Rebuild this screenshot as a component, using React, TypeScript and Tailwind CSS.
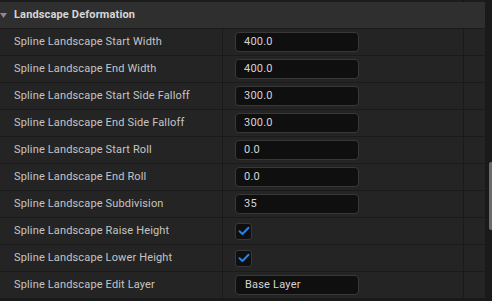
import { Fragment } from 'react';

type Row = { label: string; kind: 'num' | 'check' | 'text'; value?: string };

const rows: Row[] = [
  { label: 'Spline Landscape Start Width', kind: 'num', value: '400.0' },
  { label: 'Spline Landscape End Width', kind: 'num', value: '400.0' },
  { label: 'Spline Landscape Start Side Falloff', kind: 'num', value: '300.0' },
  { label: 'Spline Landscape End Side Falloff', kind: 'num', value: '300.0' },
  { label: 'Spline Landscape Start Roll', kind: 'num', value: '0.0' },
  { label: 'Spline Landscape End Roll', kind: 'num', value: '0.0' },
  { label: 'Spline Landscape Subdivision', kind: 'num', value: '35' },
  { label: 'Spline Landscape Raise Height', kind: 'check' },
  { label: 'Spline Landscape Lower Height', kind: 'check' },
  { label: 'Spline Landscape Edit Layer', kind: 'text', value: 'Base Layer' },
];

const CheckBox = () => (
  <div className="w-[17px] h-[17px] rounded-[3px] bg-[#0f0f0f] border border-[#383838] flex items-center justify-center">
    <svg width="12" height="10" viewBox="0 0 12 10" fill="none">
      <path d="M1.5 5.2 L4.5 8 L10.5 1.8" stroke="#2383e8" strokeWidth="2" strokeLinecap="round" strokeLinejoin="round" />
    </svg>
  </div>
);

const ValueCell = ({ row }: { row: Row }) => {
  if (row.kind === 'check') return <CheckBox />;
  return (
    <div
      className={`w-[124px] h-[20px] rounded-[4px] bg-[#0f0f0f] border border-[#383838] flex items-center text-[11px] tracking-[0.2px] text-[#d4d4d4] ${
        row.kind === 'text' ? 'pl-[9px]' : 'pl-[8px]'
      }`}
    >
      {row.value}
    </div>
  );
};

export default function App() {
  return (
    <div
      className="w-[492px] h-[301px] bg-[#1a1a1a] flex overflow-hidden"
      style={{ fontFamily: 'Roboto, "Liberation Sans", sans-serif' }}
    >
      <div className="w-[485px] flex flex-col">
        <div className="h-[2px] flex shrink-0">
          <div className="w-[463px] bg-[#1c1c1c]" />
          <div className="w-[1px] bg-[#121212]" />
          <div className="flex-1 bg-[#1c1c1c]" />
        </div>
        <div className="h-[26px] shrink-0 bg-[#2f2f2f] flex items-center relative">
          <svg className="absolute left-0 top-[11px]" width="7" height="5" viewBox="0 0 7 5">
            <path d="M0 0 H7 L3.5 5 Z" fill="#8c8c8c" />
          </svg>
          <span className="pl-[14px] text-[11px] tracking-[0.15px] font-bold text-[#d6d6d6]">Landscape Deformation</span>
        </div>
        {rows.map((row) => (
          <Fragment key={row.label}>
            <div className="h-[1px] shrink-0 bg-[#1a1a1a]" />
            <div className="h-[26px] shrink-0 bg-[#242424] flex">
              <div className="w-[222px] flex items-center pl-[14px] text-[11px] tracking-[0.15px] text-[#c4c4c4] whitespace-nowrap">
                {row.label}
              </div>
              <div className="w-[1px] bg-[#1a1a1a]" />
              <div className="w-[240px] flex items-center pl-[12px]">
                <ValueCell row={row} />
              </div>
              <div className="w-[1px] bg-[#1a1a1a]" />
              <div className="flex-1" />
            </div>
          </Fragment>
        ))}
      </div>
      <div className="flex-1 relative">
        <div className="absolute right-0 top-[162px] w-[3px] h-[68px] rounded-l-[2px] bg-[#6b6b6b]" />
      </div>
    </div>
  );
}
